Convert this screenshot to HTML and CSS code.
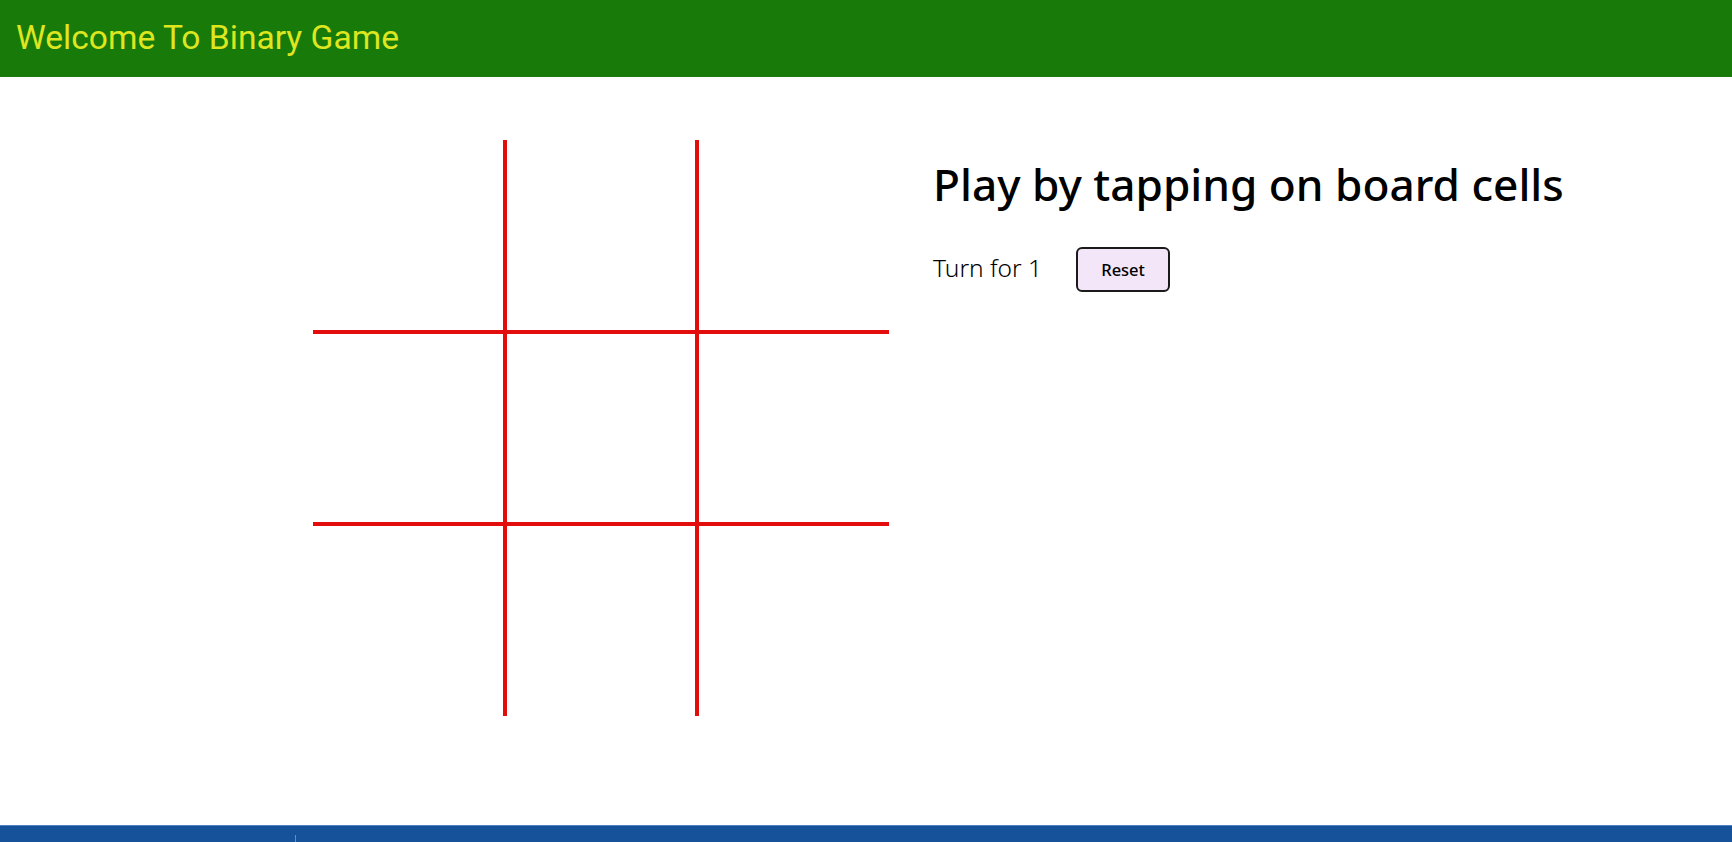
FILE: index.html
```html
<!DOCTYPE html>
<html lang="en">
<head>
<meta charset="utf-8">
<title>Binary Game</title>
<link rel="stylesheet" href="styles.css">
</head>
<body>
<div class="page">
  <header class="toolbar">
    <span class="toolbar-title">Welcome To Binary Game</span>
  </header>
  <main class="game">
    <div class="board">
      <div class="cell c-tl"></div>
      <div class="cell c-tm"></div>
      <div class="cell c-tr"></div>
      <div class="cell c-ml"></div>
      <div class="cell c-mm"></div>
      <div class="cell c-mr"></div>
      <div class="cell c-bl"></div>
      <div class="cell c-bm"></div>
      <div class="cell c-br"></div>
    </div>
    <section class="info">
      <h1 class="info-title">Play by tapping on board cells</h1>
      <div class="status">
        <span class="turn">Turn for 1</span>
        <button class="reset" type="button">Reset</button>
      </div>
    </section>
  </main>
  <footer class="taskbar">
    <span class="taskbar-divider"></span>
  </footer>
</div>
</body>
</html>
```

FILE: styles.css
```css
html, body {
  margin: 0;
  padding: 0;
  background: #ffffff;
}

.page {
  display: flex;
  flex-direction: column;
  height: 842px;
  overflow: hidden;
}

.toolbar {
  height: 77px;
  flex: 0 0 77px;
  background: #187a08;
  display: flex;
  align-items: center;
  padding-left: 16px;
  box-sizing: border-box;
}

.toolbar-title {
  font-family: Roboto, "Liberation Sans", sans-serif;
  font-size: 33.6px;
  color: #dde61f;
  padding-bottom: 2px;
}

.game {
  flex: 1 1 auto;
  display: flex;
  align-items: flex-start;
  padding-top: 63px;
  padding-left: 313px;
  gap: 44px;
}

.board {
  display: grid;
  grid-template-columns: repeat(3, 192px);
  grid-template-rows: repeat(3, 192px);
  flex: 0 0 auto;
}

.cell {
  box-sizing: border-box;
  border: 0 solid #e30d0d;
}

.c-tl { border-right-width: 2px; border-bottom-width: 2px; }
.c-tm { border-left-width: 2px; border-right-width: 2px; border-bottom-width: 2px; }
.c-tr { border-left-width: 2px; border-bottom-width: 2px; }
.c-ml { border-right-width: 2px; border-top-width: 2px; border-bottom-width: 2px; }
.c-mm { border-width: 2px; }
.c-mr { border-left-width: 2px; border-top-width: 2px; border-bottom-width: 2px; }
.c-bl { border-right-width: 2px; border-top-width: 2px; }
.c-bm { border-left-width: 2px; border-right-width: 2px; border-top-width: 2px; }
.c-br { border-left-width: 2px; border-top-width: 2px; }

.info {
  font-family: "Noto Sans", "Open Sans", sans-serif;
  color: #000000;
  padding-top: 18px;
}

.info-title {
  margin: 0;
  font-size: 44.2px;
  font-weight: 500;
  line-height: 52px;
}

.status {
  display: flex;
  align-items: center;
  gap: 34px;
  margin-top: 37px;
}

.turn {
  font-size: 24.5px;
  font-weight: 300;
  position: relative;
  top: -2px;
}

.reset {
  width: 94px;
  height: 45px;
  box-sizing: border-box;
  background: #f3e6f8;
  border: 2px solid #1a1a1a;
  border-radius: 6px;
  font-family: "Noto Sans", "Open Sans", sans-serif;
  font-size: 16.5px;
  font-weight: 500;
  color: #000000;
  padding: 0;
}

.taskbar {
  flex: 0 0 16px;
  height: 16px;
  background: #15529a;
  border-top: 1px solid #4f7fbf;
  position: relative;
}

.taskbar-divider {
  position: absolute;
  left: 295px;
  bottom: 0;
  width: 1px;
  height: 7px;
  background: #5d8fcf;
}
```
